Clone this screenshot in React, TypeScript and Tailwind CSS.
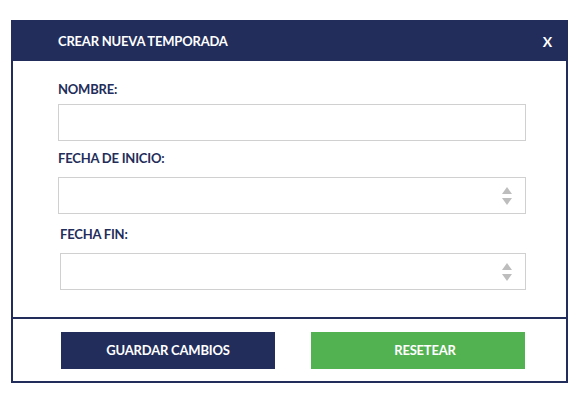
const navy = '#222d5b';

function Spinner() {
  return (
    <div className="flex flex-col items-center gap-[4px]">
      <div className="w-0 h-0 border-l-[5px] border-r-[5px] border-b-[7px] border-l-transparent border-r-transparent border-b-[#bdbdbd]" />
      <div className="w-0 h-0 border-l-[5px] border-r-[5px] border-t-[7px] border-l-transparent border-r-transparent border-t-[#bdbdbd]" />
    </div>
  );
}

function Field({ label, spinner, className }: { label: string; spinner?: boolean; className?: string }) {
  return (
    <div className={className}>
      <div className="h-[16px] text-[13px] leading-[16px] font-bold tracking-[-0.2px] text-[#232d5a]">{label}</div>
      <div className="mt-[11px] flex h-[37px] w-[468px] items-center justify-end border border-[#d0d0d0] bg-white pr-[13px]">
        {spinner && <Spinner />}
      </div>
    </div>
  );
}

export default function App() {
  return (
    <div className="min-h-[405px] bg-white pt-[20px] pl-[11px]" style={{ fontFamily: 'Lato, "Open Sans", sans-serif' }}>
      <div className="w-[557px] border-2 border-[#222d5b]">
        <div className="flex h-[39px] items-center justify-between bg-[#222d5b] pl-[45px] pr-[14px] text-[13px] font-bold tracking-[-0.2px] text-white">
          <span>CREAR NUEVA TEMPORADA</span>
          <span className="text-[14px]">X</span>
        </div>

        <div className="pl-[45px] pt-[20px] pb-[27px]">
          <div>
            <div className="h-[16px] text-[13px] leading-[16px] font-bold tracking-[-0.2px] text-[#232d5a]">NOMBRE:</div>
            <div className="mt-[7px] h-[37px] w-[468px] border border-[#d0d0d0]" />
          </div>
          <Field label="FECHA DE INICIO:" spinner className="mt-[9px]" />
          <Field label="FECHA FIN:" spinner className="mt-[12px] ml-[2px] [&>div:last-child]:w-[466px]" />
        </div>

        <div className="flex h-[64px] gap-[36px] border-t-2 border-[#222d5b] pl-[48px] pt-[13px]">
          <button className="h-[37px] w-[214px] bg-[#222d5b] text-[13px] font-bold tracking-[-0.2px] text-white" style={{ backgroundColor: navy }}>
            GUARDAR CAMBIOS
          </button>
          <button className="h-[37px] w-[214px] bg-[#52b150] pl-[14px] text-[13px] font-bold tracking-[-0.2px] text-white">
            RESETEAR
          </button>
        </div>
      </div>
    </div>
  );
}
